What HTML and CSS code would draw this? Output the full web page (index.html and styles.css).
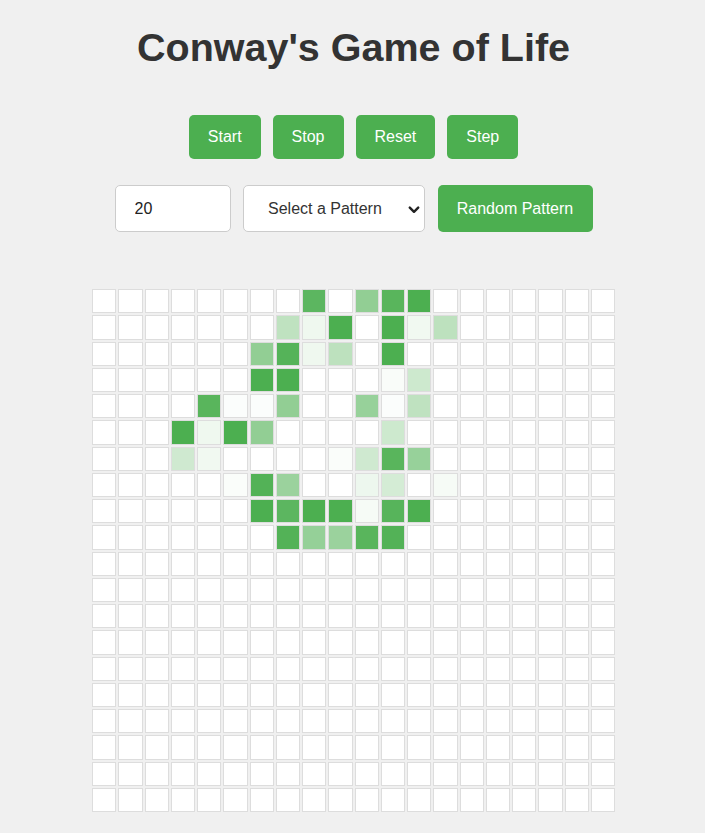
FILE: index.html
```html
<!DOCTYPE html>
<html lang="en">
<head>
<meta charset="utf-8">
<title>Conway's Game of Life</title>
<link rel="stylesheet" href="styles.css">
</head>
<body>
<div class="app">
  <h1 class="title">Conway's Game of Life</h1>
  <div class="controls">
    <button class="btn">Start</button>
    <button class="btn">Stop</button>
    <button class="btn">Reset</button>
    <button class="btn">Step</button>
  </div>
  <div class="settings">
    <input class="size-input" type="text" value="20">
    <div class="select-wrap">
      <select class="pattern-select">
        <option>Select a Pattern</option>
        <option>Glider</option>
        <option>Blinker</option>
        <option>Pulsar</option>
      </select>
      <svg class="chevron" width="12" height="8" viewBox="0 0 12 8" aria-hidden="true">
        <path d="M1.8 1.6 L6 5.8 L10.2 1.6" fill="none" stroke="#222" stroke-width="2.4" stroke-linecap="round" stroke-linejoin="round"/>
      </svg>
    </div>
    <button class="btn btn-random">Random Pattern</button>
  </div>
  <div class="grid" id="grid"></div>
</div>
<script src="script.js"></script>
</body>
</html>
```

FILE: styles.css
```css
html, body {
  margin: 0;
  padding: 0;
}

body {
  background: #f0f0f0;
  font-family: "Liberation Sans", Arial, sans-serif;
  color: #333;
}

.app {
  display: flex;
  flex-direction: column;
  align-items: center;
  padding: 24px 0 0 2px;
}

.title {
  margin: 0 0 45px;
  font-size: 39.5px;
  font-weight: bold;
  line-height: 46px;
  color: #333;
}

.controls {
  display: flex;
  gap: 12px;
  margin-bottom: 26px;
}

.btn {
  background: #4caf50;
  color: #fff;
  border: none;
  border-radius: 5px;
  padding: 13px 19px;
  font-family: "Liberation Sans", Arial, sans-serif;
  font-size: 16px;
  line-height: 18px;
  cursor: pointer;
}

.settings {
  display: flex;
  gap: 12.5px;
  height: 47px;
  margin-bottom: 57px;
}

.size-input {
  box-sizing: border-box;
  width: 116px;
  height: 47px;
  border: 1px solid #ccc;
  border-radius: 5px;
  padding: 0 19px;
  background: #fff;
  font-family: "Liberation Sans", Arial, sans-serif;
  font-size: 16px;
  color: #222;
  outline: none;
}

.select-wrap {
  position: relative;
  display: flex;
}

.pattern-select {
  appearance: none;
  -webkit-appearance: none;
  box-sizing: border-box;
  width: 182px;
  height: 47px;
  border: 1px solid #ccc;
  border-radius: 5px;
  padding: 0 20px 0 24px;
  background: #fff;
  font-family: "Liberation Sans", Arial, sans-serif;
  font-size: 16px;
  color: #333;
  outline: none;
}

.chevron {
  position: absolute;
  right: 5px;
  top: 21px;
  pointer-events: none;
}

.btn-random {
  width: 155px;
  padding: 0;
}

.grid {
  display: grid;
  grid-template-columns: repeat(20, 1fr);
  grid-auto-rows: 24.25px;
  gap: 2px;
  width: 523px;
}

.cell {
  box-sizing: border-box;
  border: 1px solid #ddd;
  background: #fff;
}
```

FILE: script.js
```js
var alive = {
  0: {8: 0.91, 10: 0.61, 11: 0.93, 12: 1},
  1: {7: 0.36, 8: 0.09, 9: 1, 11: 1, 12: 0.08, 13: 0.37},
  2: {6: 0.61, 7: 0.95, 8: 0.09, 9: 0.37, 11: 1},
  3: {6: 1, 7: 1, 11: 0.035, 12: 0.28},
  4: {4: 0.93, 5: 0.02, 6: 0.02, 7: 0.61, 10: 0.58, 11: 0.02, 12: 0.36},
  5: {3: 1, 4: 0.09, 5: 1, 6: 0.61, 11: 0.28},
  6: {3: 0.27, 4: 0.08, 9: 0.03, 10: 0.27, 11: 0.93, 12: 0.58},
  7: {5: 0.03, 6: 0.96, 7: 0.56, 10: 0.1, 11: 0.24, 13: 0.05},
  8: {6: 1, 7: 0.91, 8: 1, 9: 1, 10: 0.05, 11: 0.94, 12: 1},
  9: {7: 0.96, 8: 0.59, 9: 0.56, 10: 0.93, 11: 0.96}
};

var grid = document.getElementById('grid');
for (var r = 0; r < 20; r++) {
  for (var c = 0; c < 20; c++) {
    var cell = document.createElement('div');
    cell.className = 'cell';
    var a = alive[r] && alive[r][c];
    if (a) {
      var R = Math.round(255 - a * 179);
      var G = Math.round(255 - a * 80);
      var B = Math.round(255 - a * 175);
      cell.style.backgroundColor = 'rgb(' + R + ',' + G + ',' + B + ')';
    }
    grid.appendChild(cell);
  }
}
```
